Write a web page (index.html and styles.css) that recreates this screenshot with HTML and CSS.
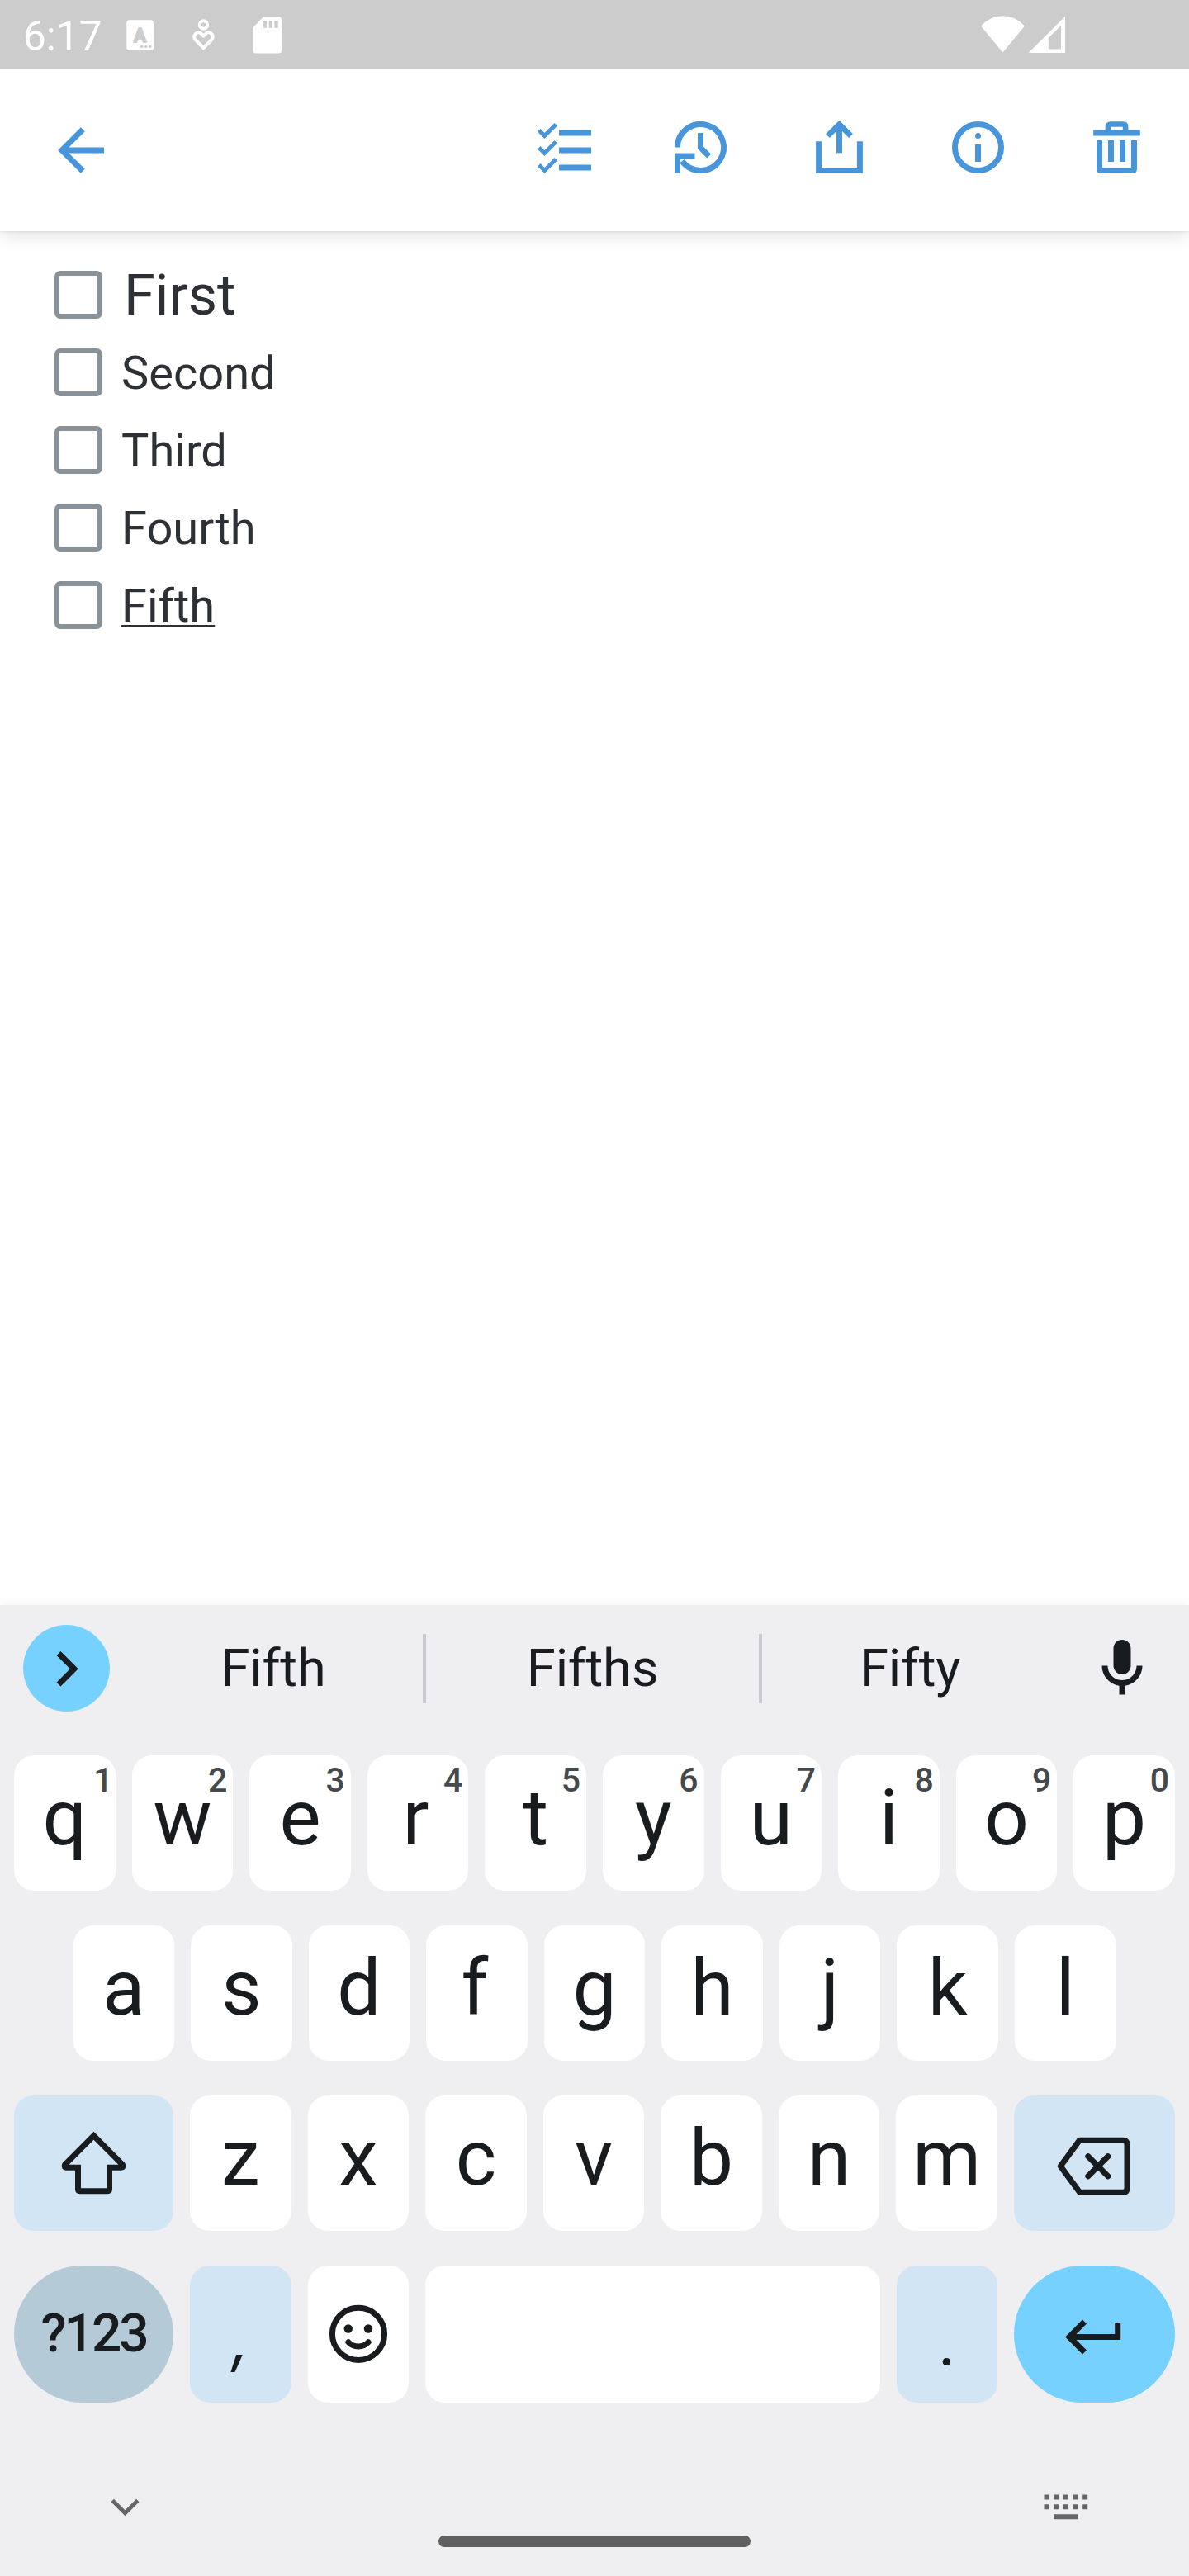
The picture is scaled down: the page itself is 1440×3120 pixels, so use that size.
FILE: index.html
```html
<!DOCTYPE html>
<html lang="en">
<head>
<meta charset="utf-8">
<title>Note</title>
<link rel="stylesheet" href="styles.css">
</head>
<body>
<div class="screen">
  <div class="status">
    <span class="clock">6:17</span>
    <svg class="st-app" width="34" height="38" viewBox="0 0 34 38"><rect x=".3" y=".3" width="32.7" height="36.7" rx="3.5" fill="#fff"/><text class="st-letter" x="16.6" y="27" text-anchor="middle">A</text><g fill="#ccc"><circle cx="18.8" cy="32.4" r="1.7"/><circle cx="23.8" cy="32.4" r="1.7"/><circle cx="28.8" cy="32.4" r="1.7"/></g></svg>
    <svg class="st-care" width="28" height="40" viewBox="0 0 28 40" fill="none" stroke="#fff" stroke-width="4"><circle cx="13.5" cy="8" r="4.7"/><path d="M13.5 36L3.8 26.300A5 5 0 0 1 10.800 18.900L13.500 21.500L16.200 18.900A5 5 0 0 1 23.200 26.300Z"/></svg>
    <svg class="st-sd" width="36" height="46" viewBox="0 0 36 46"><path d="M13.300 .3H31.500Q35 .3 35 3.800V41Q35 44.500 31.500 44.500H3.500Q0 44.500 0 41V13.500Z" fill="#fff"/><path d="M13 5.300h4v8.500h-4zM19.700 5.300h4v8.500h-4zM26.300 5.300h4.500v8.500h-4.500z" fill="#ccc"/></svg>
    <svg class="st-net" width="104" height="46" viewBox="0 0 104 46" fill="#fff"><path d="M0 12.500Q11 .3 26.500 .3T53 12.500L26.500 44.500Z"/><path fill-rule="evenodd" d="M57.500 45L102 .8V45ZM81.800 40.500H97V12L81.800 27Z"/></svg>
  </div>

  <header class="toolbar">
    <svg class="icon back" viewBox="0 0 84 84"><path d="M70 42H22M44.300 16.700L19 42L44.300 67.300"/></svg>
    <svg class="icon" viewBox="0 0 84 84"><path d="M39 21H78M39 42H78M39 63H78"/><path stroke-width="5" d="M14.800 17.800L21.500 24.500L35.300 10.700M14.800 38.800L21.500 45.500L35.300 31.700M14.800 59.800L21.500 66.500L35.300 52.700"/></svg>
    <svg class="icon" viewBox="0 0 84 84"><path d="M14.500 38.500A28 28 0 1 1 20 55.200M14.500 70V49H35.500M42.500 21V38.900L52.700 49.100"/></svg>
    <svg class="icon" viewBox="0 0 84 84"><path d="M17.600 31.300V66.500H67.400V31.300M42.500 45.300V12M28.500 24.600L42.500 10.600L56.500 24.600"/></svg>
    <svg class="icon" viewBox="0 0 84 84"><circle cx="42.500" cy="38.500" r="28"/><path d="M42.500 35V56"/><circle cx="42.500" cy="24.500" r="3.500" class="solid"/></svg>
    <svg class="icon" viewBox="0 0 84 84"><path d="M14.200 21H70.800M21.500 30V64.500Q21.500 66.500 23.500 66.500H61.500Q63.500 66.500 63.500 64.500V30M35.500 30V56M49.500 30V56"/><path d="M31.900 21V13.500Q31.900 10.500 34.900 10.500H50.100Q53.100 10.500 53.100 13.500V21" stroke-width="6.600"/></svg>
  </header>

  <main class="note">
    <label class="item first"><span class="box"></span><span class="label">First</span></label>
    <label class="item"><span class="box"></span><span class="label">Second</span></label>
    <label class="item"><span class="box"></span><span class="label">Third</span></label>
    <label class="item"><span class="box"></span><span class="label">Fourth</span></label>
    <label class="item"><span class="box"></span><span class="label composing">Fifth</span></label>
  </main>

  <section class="keyboard">
    <div class="suggest">
      <div class="expand"><svg width="105" height="105" viewBox="0 0 105 105"><path d="M43 34.500L61.800 53.300L43 72.100" fill="none" stroke="#191c1e" stroke-width="7"/></svg></div>
      <div class="word w1">Fifth</div>
      <div class="sep"></div>
      <div class="word w2">Fifths</div>
      <div class="sep"></div>
      <div class="word w3">Fifty</div>
      <svg class="mic" width="84" height="84" viewBox="0 0 24 24" fill="#191c1e"><path d="M12 14c1.660 0 3-1.340 3-3V5c0-1.660-1.340-3-3-3S9 3.340 9 5v6c0 1.660 1.340 3 3 3zM17 11c0 2.760-2.240 5-5 5s-5-2.240-5-5H5c0 3.530 2.610 6.430 6 6.920V21h2v-3.080c3.390-.49 6-3.390 6-6.920h-2z"/></svg>
    </div>
    <div class="row">
      <div class="key">q<span class="hint one">1</span></div><div class="key">w<span class="hint">2</span></div><div class="key">e<span class="hint">3</span></div><div class="key nudge">r<span class="hint">4</span></div><div class="key">t<span class="hint">5</span></div><div class="key">y<span class="hint">6</span></div><div class="key">u<span class="hint">7</span></div><div class="key">i<span class="hint">8</span></div><div class="key">o<span class="hint">9</span></div><div class="key">p<span class="hint">0</span></div>
    </div>
    <div class="row home">
      <div class="key">a</div><div class="key">s</div><div class="key">d</div><div class="key nudge">f</div><div class="key">g</div><div class="key">h</div><div class="key">j</div><div class="key">k</div><div class="key">l</div>
    </div>
    <div class="row">
      <div class="key fn wide"><svg class="glyph" viewBox="0 0 96 96"><path d="M47.500 14.800L12.600 49.700Q11 53.200 14.500 53.200H28.500V79.500Q28.500 81.700 30.700 81.700H64.300Q66.500 81.700 66.500 79.500V53.200H80.500Q84 53.200 82.400 49.700Z"/></svg></div>
      <div class="key">z</div><div class="key">x</div><div class="key">c</div><div class="key">v</div><div class="key">b</div><div class="key">n</div><div class="key">m</div>
      <div class="key fn wider"><svg class="glyph" viewBox="0 0 96 96"><path stroke-linejoin="round" d="M29.500 20.200H82Q87 20.200 87 25.200V78.200Q87 83.200 82 83.200H29.500L6.300 51.700Z"/><path stroke-linecap="round" d="M39.800 39.700L63.800 63.700M63.800 39.700L39.800 63.700"/></svg></div>
    </div>
    <div class="row last">
      <div class="key sym wide">?123</div>
      <div class="key fn narrow comma">,</div>
      <div class="key narrow"><svg class="glyph" viewBox="0 0 96 96"><circle cx="48" cy="47.800" r="31.600"/><g class="dots"><circle cx="35.800" cy="41.500" r="5.200"/><circle cx="60" cy="41.500" r="5.200"/></g><path stroke-linecap="round" d="M35.900 57.800Q40.500 63 48 63T60.100 57.800"/></svg></div>
      <div class="key space"></div>
      <div class="key fn narrow period">.</div>
      <div class="key enter wider"><svg class="glyph" viewBox="0 0 96 96"><path d="M75.700 34V51.500H19M35.500 33L17 51.500L35.500 70"/></svg></div>
    </div>
    <div class="nav">
      <svg class="hide" width="36" height="24" viewBox="0 0 36 24"><path d="M2.200 2.500L17.500 17.800L32.800 2.500" fill="none" stroke="#666" stroke-width="5"/></svg>
      <div class="pill"></div>
      <svg class="switch" width="54" height="32" viewBox="0 0 54 32" fill="#666"><path d="M.5.500h6v6h-6zM12.200.500h6v6h-6zM23.800.500h6v6h-6zM35.500.500h6v6h-6zM47.200.500h6v6h-6zM.5 12.300h6v6h-6zM12.200 12.300h6v6h-6zM23.800 12.300h6v6h-6zM35.500 12.300h6v6h-6zM47.200 12.300h6v6h-6zM12.200 24.200h29.300v6h-29.300z"/></svg>
    </div>
  </section>
</div>
</body>
</html>
```

FILE: styles.css
```css
* { box-sizing: border-box; }
body { margin: 0; background: #fff; font-family: Roboto, "Liberation Sans", sans-serif; }
svg { display: block; flex: none; }
.screen { width: 1440px; height: 3120px; display: flex; flex-direction: column; overflow: hidden; }

.status { height: 84px; flex: none; position: relative; z-index: 1; background: #ccc; display: flex; align-items: flex-start; padding-left: 28px; }
.clock { width: 125px; font-size: 49.500px; line-height: 88px; color: #fff; }
.st-app { margin-top: 24px; }
.st-letter { font: 700 23px Roboto, sans-serif; fill: #ccc; stroke: #ccc; stroke-width: 1.5px; stroke-linejoin: round; }
.st-care { margin: 22px 0 0 46px; }
.st-sd { margin: 20px 0 0 45px; }
.st-net { margin: 19px 148px 0 auto; }

.toolbar { height: 196px; flex: none; position: relative; background: #fff; display: flex; align-items: center; gap: 84px; padding: 0 46px 0 56px; box-shadow: 0 2px 22px rgba(0, 0, 0, .16), 0 1px 2px rgba(0, 0, 0, .06); }
.icon { width: 84px; height: 84px; fill: none; stroke: #4895d9; stroke-width: 7px; }
.icon [stroke-width="5"] { stroke-width: 5px; }
.icon .solid { fill: #4895d9; stroke: none; }
.back { margin-right: auto; }

.note { flex: 1; padding: 48px 0 0 66px; color: #2d3035; }
.item { height: 58px; margin-bottom: 36px; display: flex; }
.box { width: 58px; height: 58px; border: 6px solid #8a9299; border-radius: 7px; margin-right: 23px; }
.label { height: 58px; font-size: 56px; line-height: 60px; }
.first .label { font-size: 68.500px; line-height: 60px; margin-left: 3px; }
.composing { text-decoration: underline; text-decoration-thickness: 3px; text-underline-offset: 4px; text-decoration-skip-ink: none; }

.keyboard { height: 1176px; flex: none; position: relative; background: #efeff2; box-shadow: 0 -2px 10px rgba(0, 0, 0, .05); color: #191c1e; }
.suggest { height: 182px; display: flex; align-items: flex-start; padding: 24px 39px 0 28px; }
.expand { width: 105px; height: 105px; border-radius: 50%; background: #77d1ff; margin-right: 17px; }
.word { font-size: 63.500px; line-height: 106px; height: 105px; text-align: center; letter-spacing: -.3px; }
.w1 { width: 362px; }
.w2 { width: 403px; }
.w3 { width: 358px; }
.sep { width: 4px; height: 84px; margin-top: 11px; background: #c9cacd; }
.mic { margin: 11px 0 0 auto; }

.row { display: flex; gap: 20px; height: 164px; margin-bottom: 42px; padding: 0 17px; }
.home { padding: 0 88.500px; }
.last { height: 166px; margin-bottom: 0; }
.key { position: relative; flex: 1 1 0; min-width: 0; height: 100%; border-radius: 24px; background: #fff; text-align: center; font-size: 94.500px; line-height: 152px; }
.nudge { text-indent: -5px; }
.hint { position: absolute; right: 7px; top: 6px; font-size: 41px; line-height: 48px; font-weight: 500; text-indent: 0; color: #46494b; }
.hint.one { right: 3px; }
.fn { background: #d2e5f4; }
.wide { flex: 0 0 193px; }
.wider { flex: 0 0 195px; }
.narrow { flex: 0 0 122.500px; }
.glyph { width: 96px; height: 96px; margin: 34px auto 0; fill: none; stroke: #191c1e; stroke-width: 7px; }
.last .glyph { margin-top: 35px; }
.glyph .dots { fill: #191c1e; stroke: none; }
.sym { background: #b4cad7; border-radius: 83px; font-size: 64px; font-weight: 500; line-height: 165px; letter-spacing: -3px; }
.enter { background: #77d1ff; border-radius: 83px; }
.comma { font-family: Inter, sans-serif; font-size: 76px; font-style: italic; line-height: 176px; }
.period { font-size: 84px; line-height: 186px; }

.nav { height: 210px; display: flex; align-items: flex-start; justify-content: space-between; padding: 0 122px 0 133.500px; }
.hide { margin-top: 116px; }
.pill { width: 378px; height: 14px; border-radius: 7px; background: #606060; margin: 161px 0 0 7px; }
.switch { margin-top: 111px; }
```
